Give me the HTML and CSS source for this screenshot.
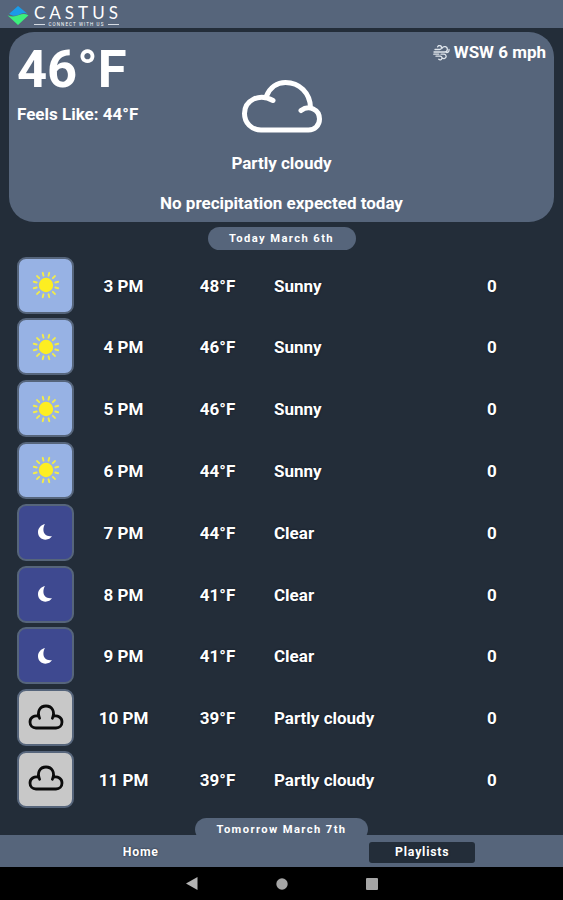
FILE: index.html
```
<!DOCTYPE html>
<html lang="en">
<head>
    <meta charset="UTF-8">
    <meta name="viewport" content="width=device-width, initial-scale=1.0">
    <title>Castus Weather</title>
    <link rel="stylesheet" href="styles.css">
</head>
<body>
    <!-- icons used by the hourly rows -->
    <svg class="sprite">
        <symbol id="sun" viewBox="0 0 28 28">
            <circle cx="14" cy="14" r="7.200" fill="#fdee21"/>
            <g stroke="#f3ec4a" stroke-width="1.900" stroke-linecap="round">
                <path id="rays" d="M16.500 4.700l.8-2.900M11.500 4.700l-.8-2.900M16.500 23.300l.8 2.900M11.500 23.300l-.8 2.900"/>
                <use href="#rays" transform="rotate(60 14 14)"/>
                <use href="#rays" transform="rotate(120 14 14)"/>
            </g>
        </symbol>
        <symbol id="moon" viewBox="0 0 16 18">
            <path d="M8 1C3.500 2.200 1 5.400 1 9.300c0 4.200 3.300 7.400 7.500 7.400 3 0 5.200-1.300 6.500-3.600-5 .9-8.500-1.700-8.600-6C6.400 4.700 6.900 2.700 8 1z" fill="#fff"/>
        </symbol>
        <symbol id="cloud" viewBox="0 0 36 26">
            <path d="M11.600 14.200C8.600 7.500 12 2 18 2s9.400 5.500 6.400 12.200M11 12.300C6 11 2 13.700 2 18c0 3.600 2.500 6 6 6h20c3.500 0 6-2.400 6-6 0-4.300-4-7-9-5.700" fill="none" stroke="#0b0b0b" stroke-width="2.800" stroke-linecap="round"/>
        </symbol>
    </svg>

    <header class="topbar">
        <svg class="logo" width="22" height="19" viewBox="0 0 22 19">
            <path d="M11 0l9.500 7.800c-3.500-.8-5.500-.5-8.500 1-3.200 1.500-6.500 1.500-9.800-1z" fill="#1b9be8"/>
            <path d="M.5 9.200c4 1.700 7.500 1.500 11.500-.2 3.500-1.300 6-1.300 9.500.2L11 19z" fill="#3cf07c"/>
        </svg>
        <div class="brand">
            <div class="brand-name">CASTUS</div>
            <div class="brand-tag"><span>CONNECT WITH US</span></div>
        </div>
    </header>

    <main class="content">
        <section class="current">
            <div class="current-top">
                <div>
                    <div class="temp">46°F</div>
                    <div class="feels">Feels Like: 44°F</div>
                </div>
                <div class="wind">
                    <svg width="17" height="16" viewBox="0 0 17 16" fill="none" stroke="#dfe5ec" stroke-width="1.300" stroke-linecap="round">
                        <path d="M2 4.500h4.500a2 2 0 1 0-1.900-2.600M1 7h10.500a2.700 2.700 0 1 0-2.300-3.900M.8 9.200h5M3 11.200h4a1.800 1.800 0 1 1-1.200 3M8 9.200h3a2.200 2.200 0 1 1-1.700 3.700M13.500 7.500c2 0 2.700-1.500 2.500-3"/>
                    </svg>
                    <span>WSW 6 mph</span>
                </div>
            </div>
            <svg class="big-cloud" width="82" height="56" viewBox="0 0 82 56" fill="none" stroke="#fff" stroke-width="5" stroke-linecap="round">
                <path d="M32 21.500C18 13.500 3.500 21.500 3.500 34.500 3.500 44 10.500 51 20 51h47.500c6 0 11-4.500 11-11 0-9.500-10.500-14.500-18.500-8.500M25.500 17C29 8.500 36 3.500 44.500 3.500 58.500 3.500 69 14 69.500 28.500"/>
            </svg>
            <div class="condition">Partly cloudy</div>
            <div class="precip">No precipitation expected today</div>
        </section>

        <div class="day">Today March 6th</div>

        <div class="hours">
            <div class="hour">
                <div class="icon sunny"><svg width="28" height="28"><use href="#sun"/></svg></div>
                <div class="time">3 PM</div><div class="deg">48°F</div><div class="desc">Sunny</div><div class="rain">0</div>
            </div>
            <div class="hour">
                <div class="icon sunny"><svg width="28" height="28"><use href="#sun"/></svg></div>
                <div class="time">4 PM</div><div class="deg">46°F</div><div class="desc">Sunny</div><div class="rain">0</div>
            </div>
            <div class="hour">
                <div class="icon sunny"><svg width="28" height="28"><use href="#sun"/></svg></div>
                <div class="time">5 PM</div><div class="deg">46°F</div><div class="desc">Sunny</div><div class="rain">0</div>
            </div>
            <div class="hour">
                <div class="icon sunny"><svg width="28" height="28"><use href="#sun"/></svg></div>
                <div class="time">6 PM</div><div class="deg">44°F</div><div class="desc">Sunny</div><div class="rain">0</div>
            </div>
            <div class="hour">
                <div class="icon night"><svg width="16" height="18"><use href="#moon"/></svg></div>
                <div class="time">7 PM</div><div class="deg">44°F</div><div class="desc">Clear</div><div class="rain">0</div>
            </div>
            <div class="hour">
                <div class="icon night"><svg width="16" height="18"><use href="#moon"/></svg></div>
                <div class="time">8 PM</div><div class="deg">41°F</div><div class="desc">Clear</div><div class="rain">0</div>
            </div>
            <div class="hour">
                <div class="icon night"><svg width="16" height="18"><use href="#moon"/></svg></div>
                <div class="time">9 PM</div><div class="deg">41°F</div><div class="desc">Clear</div><div class="rain">0</div>
            </div>
            <div class="hour">
                <div class="icon cloudy"><svg width="36" height="26"><use href="#cloud"/></svg></div>
                <div class="time">10 PM</div><div class="deg">39°F</div><div class="desc">Partly cloudy</div><div class="rain">0</div>
            </div>
            <div class="hour">
                <div class="icon cloudy"><svg width="36" height="26"><use href="#cloud"/></svg></div>
                <div class="time">11 PM</div><div class="deg">39°F</div><div class="desc">Partly cloudy</div><div class="rain">0</div>
            </div>
        </div>

        <div class="day next-day">Tomorrow March 7th</div>
    </main>

    <nav class="tabs">
        <div class="tab"><span>Home</span></div>
        <div class="tab"><span class="active">Playlists</span></div>
    </nav>

    <div class="system-bar">
        <svg width="12" height="13" viewBox="0 0 12 13"><path d="M0 6.500L11.500 0v13z" fill="#b4b4b4"/></svg>
        <svg width="12" height="12" viewBox="0 0 12 12"><circle cx="6" cy="6" r="5.700" fill="#a6a6a6"/></svg>
        <svg width="12" height="12" viewBox="0 0 12 12"><rect width="12" height="12" rx="1" fill="#a6a6a6"/></svg>
    </div>
</body>
</html>
```
FILE: styles.css
```
* {
    box-sizing: border-box;
}
body {
    margin: 0;
    height: 900px;
    display: flex;
    flex-direction: column;
    font-family: Roboto, sans-serif;
    font-weight: bold;
    font-size: 17px;
    color: white;
    background: #232d39;
    overflow: hidden;
}
svg {
    display: block;
}
.sprite {
    display: none;
}
.topbar {
    flex: none;
    height: 28px;
    display: flex;
    align-items: flex-start;
    gap: 5px;
    padding: 4px 7px 0;
    background: #56657b;
}
.logo {
    margin-top: 2px;
}
.brand-name {
    font-family: Lato, sans-serif;
    font-weight: normal;
    font-size: 17px;
    line-height: 17px;
    letter-spacing: 4px;
}
.brand-tag {
    display: flex;
    align-items: center;
    gap: 4px;
    width: 85px;
    height: 5px;
    margin-top: 1px;
    font-size: 4.5px;
    line-height: 5px;
    letter-spacing: 1.1px;
    font-weight: normal;
    white-space: nowrap;
}
.brand-tag::before,
.brand-tag::after {
    content: "";
    flex: 1;
    height: 1px;
    background: #d5dbe3;
}
.content {
    flex: 1;
    min-height: 0;
    overflow: hidden;
}
.current {
    height: 190px;
    margin: 4px 9px 0;
    padding: 9px 8px 0 8px;
    border-radius: 25px;
    background: #56657b;
    text-align: center;
}
.current-top {
    display: flex;
    justify-content: space-between;
    height: 38px;
    text-align: left;
}
.temp {
    font-size: 52.5px;
    line-height: 57px;
}
.feels {
    margin-top: 6px;
    line-height: 20px;
}
.wind {
    display: flex;
    gap: 4px;
    line-height: 23px;
}
.wind svg {
    margin-top: 4px;
}
.big-cloud {
    margin: 0 auto;
}
.condition {
    margin-top: 18px;
    line-height: 20px;
}
.precip {
    margin-top: 20px;
    line-height: 20px;
}
.day {
    width: 148px;
    height: 23px;
    margin: 5px auto 0;
    border-radius: 12px;
    background: #56657b;
    font-size: 11.2px;
    line-height: 23px;
    letter-spacing: 1.4px;
    text-align: center;
}
.hours {
    margin-top: 4.2px;
    padding: 0 17px;
}
.hour {
    display: grid;
    grid-template-columns: 57px 99px 89px 187px 86px;
    align-items: center;
    height: 61.8px;
    line-height: 20px;
    text-shadow: 0 0 2px #0c1420;
}
.hour div:not(.icon) {
    padding-top: 1px;
}
.icon {
    height: 57px;
    display: flex;
    align-items: center;
    justify-content: center;
    border: 2px solid #56657b;
    border-radius: 9px;
}
.sunny {
    background: #97b2e4;
}
.night {
    background: #3e4990;
}
.night svg {
    margin-right: 2px;
}
.cloudy {
    background: #c8c8c8;
}
.cloudy svg {
    margin-bottom: 2px;
}
.time,
.deg,
.rain {
    text-align: center;
}
.desc {
    padding-left: 12px;
}
.next-day {
    width: 173px;
    margin-top: 7.6px;
}
.tabs {
    flex: none;
    display: flex;
    align-items: center;
    height: 32px;
    background: #56657b;
    font-size: 12.3px;
    line-height: 21px;
    letter-spacing: 0.8px;
}
.tab {
    flex: 1;
    display: flex;
    justify-content: center;
    padding-top: 3px;
    text-shadow: 0 0 2px #1a2430;
}
.tab .active {
    width: 106px;
    border-radius: 3px;
    background: #232d39;
    text-align: center;
}
.system-bar {
    flex: none;
    display: flex;
    align-items: center;
    justify-content: center;
    gap: 78px;
    height: 33px;
    background: #000;
}
```
